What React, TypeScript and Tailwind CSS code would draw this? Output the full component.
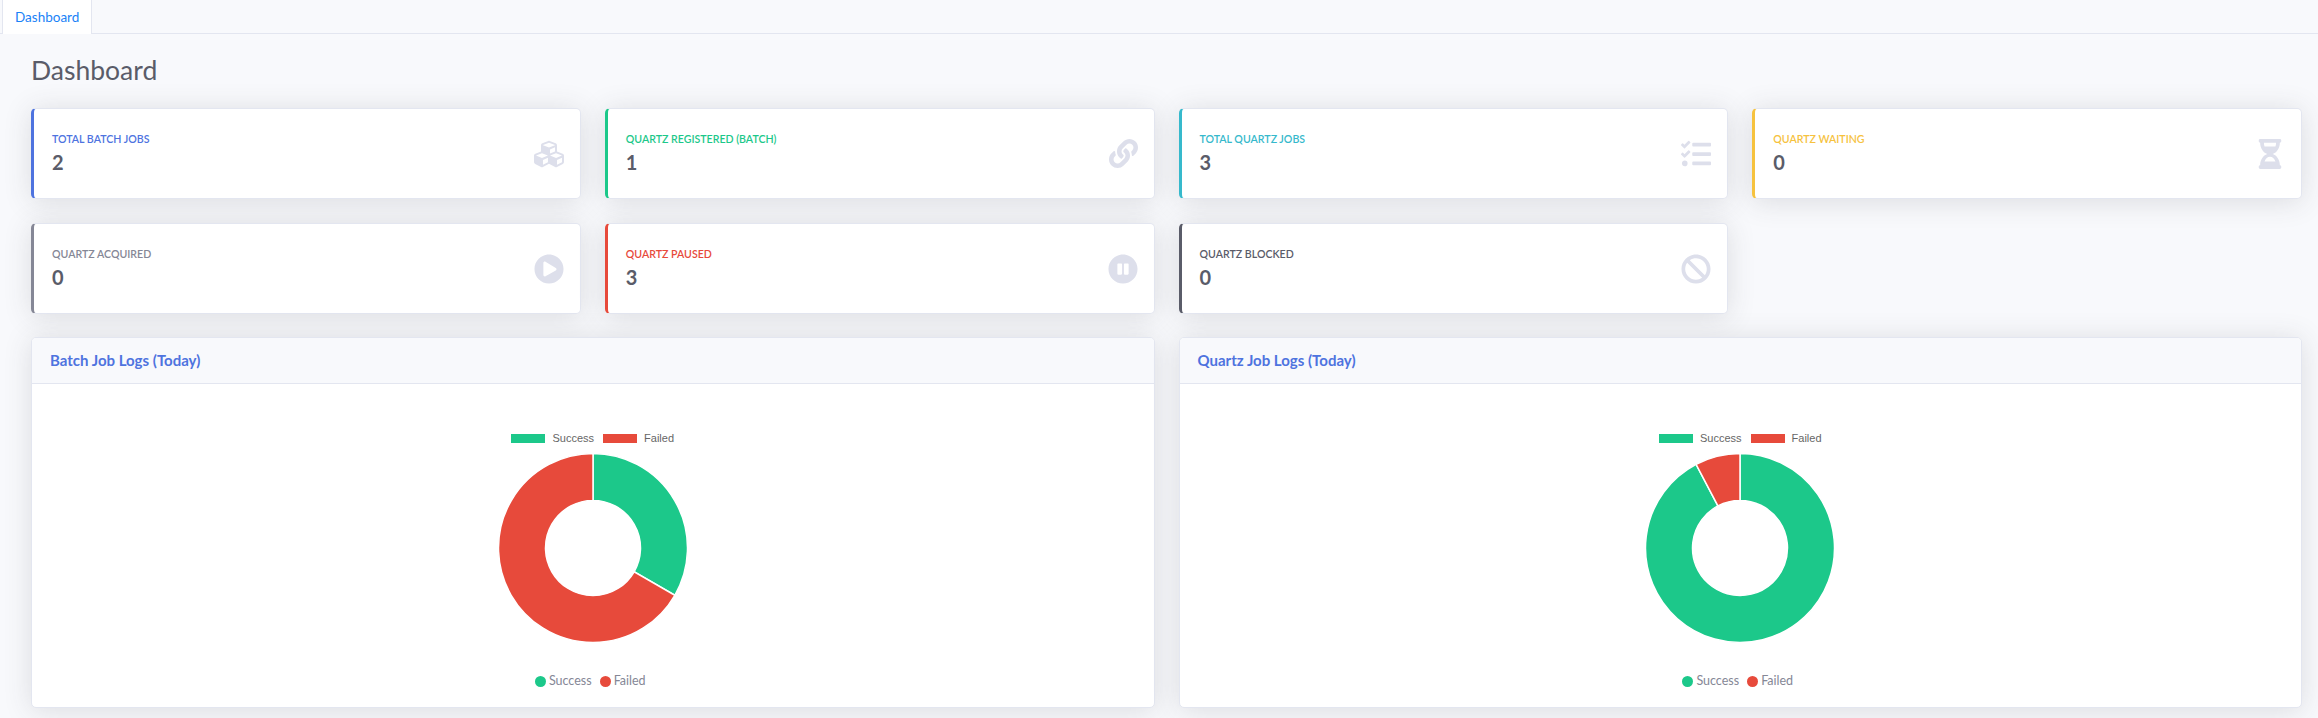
import { FaBan, FaCubes, FaHourglassHalf, FaLink, FaPauseCircle, FaPlayCircle, FaTasks } from "react-icons/fa"

const stats = [
  { title: "Total Batch Jobs", value: 2, border: "border-l-[#4e73df]", text: "text-[#4e73df]", icon: <FaCubes size={30} /> },
  { title: "Quartz Registered (Batch)", value: 1, border: "border-l-[#1cc88a]", text: "text-[#1cc88a]", icon: <FaLink size={29} /> },
  { title: "Total Quartz Jobs", value: 3, border: "border-l-[#36b9cc]", text: "text-[#36b9cc]", icon: <FaTasks size={30} /> },
  { title: "Quartz Waiting", value: 0, border: "border-l-[#f6c23e]", text: "text-[#f6c23e]", icon: <FaHourglassHalf size={30} /> },
  { title: "Quartz Acquired", value: 0, border: "border-l-[#858796]", text: "text-[#858796]", icon: <FaPlayCircle size={30} /> },
  { title: "Quartz Paused", value: 3, border: "border-l-[#e74a3b]", text: "text-[#e74a3b]", icon: <FaPauseCircle size={30} /> },
  { title: "Quartz Blocked", value: 0, border: "border-l-[#5a5c69]", text: "text-[#5a5c69]", icon: <FaBan size={30} /> },
]

const polar = (r: number, turn: number) => {
  const a = turn * 2 * Math.PI
  return `${96 + r * Math.sin(a)} ${96 - r * Math.cos(a)}`
}

function arc(from: number, to: number) {
  const large = to - from > 0.5 ? 1 : 0
  return `M${polar(94.5, from)} A94.5 94.5 0 ${large} 1 ${polar(94.5, to)} L${polar(47.5, to)} A47.5 47.5 0 ${large} 0 ${polar(47.5, from)} Z`
}

function Donut({ share }: { share: number }) {
  return (
    <svg width="192" height="192" viewBox="0 0 192 192" className="w-[192px] h-[192px]">
      <path d={arc(0, share)} fill="#1cc88a" stroke="#fff" strokeWidth="1.5" />
      <path d={arc(share, 1)} fill="#e74a3b" stroke="#fff" strokeWidth="1.5" />
    </svg>
  )
}

function StatCard({ title, value, border, text, icon }: (typeof stats)[0]) {
  return (
    <div className={`h-[91px] bg-white rounded-[5px] border border-[#e3e6f0] border-l-[3px] ${border} shadow-[0_2.4px_28px_0_rgba(58,59,69,0.15)] flex items-center justify-between pl-[18px] pr-[16px]`}>
      <div className="mt-[1px]">
        <div className={`text-[10.6px] leading-[14px] font-semibold uppercase ${text}`}>{title}</div>
        <div className="text-[20px] leading-[28px] mt-[2px] font-bold text-[#5a5c69]">{value}</div>
      </div>
      <div className="text-[#dddfeb]">{icon}</div>
    </div>
  )
}

function LegendTop() {
  return (
    <div className="flex items-center justify-center gap-[9px] h-[14px] text-[11px] text-[#666] font-['Liberation_Sans',sans-serif]">
      <span className="flex items-center gap-[7px]">
        <i className="block w-[34px] h-[9px] bg-[#1cc88a]" />
        Success
      </span>
      <span className="flex items-center gap-[7px]">
        <i className="block w-[34px] h-[9px] bg-[#e74a3b]" />
        Failed
      </span>
    </div>
  )
}

function LegendBottom() {
  return (
    <div className="-ml-[5px] flex items-center justify-center gap-[8px] text-[12.5px] leading-[16px] text-[#858796]">
      <span className="flex items-center gap-[3px]">
        <i className="block w-[11px] h-[11px] rounded-full bg-[#1cc88a]" />
        Success
      </span>
      <span className="flex items-center gap-[3px]">
        <i className="block w-[11px] h-[11px] rounded-full bg-[#e74a3b]" />
        Failed
      </span>
    </div>
  )
}

function ChartCard({ title, share }: { title: string; share: number }) {
  return (
    <div className="h-[371px] bg-white rounded-[5px] border border-[#e3e6f0] shadow-[0_2.4px_28px_0_rgba(58,59,69,0.15)] overflow-hidden">
      <div className="h-[46px] bg-[#f8f9fc] border-b border-[#e3e6f0] flex items-center px-[18px] text-[15px] font-bold text-[#4e73df]">{title}</div>
      <div className="flex flex-col items-center pt-[47px]">
        <LegendTop />
        <div className="mt-[7px]">
          <Donut share={share} />
        </div>
        <div className="mt-[29px]">
          <LegendBottom />
        </div>
      </div>
    </div>
  )
}

export default function App() {
  return (
    <div className="min-h-[718px] bg-[#f8f9fc] font-['Lato',sans-serif] overflow-hidden">
      <div className="h-[34px] border-b border-[#e3e6f0] flex pl-[2px]">
        <div className="h-[34px] bg-white border-x border-[#e3e6f0] px-[12px] flex items-center text-[13.5px] text-[#1a82f7]">Dashboard</div>
      </div>
      <div className="pl-[31px] pr-[16px]">
        <h1 className="text-[26.5px] leading-[34px] font-normal text-[#5a5c69] mt-[19px] mb-[21px]">Dashboard</h1>
        <div className="grid grid-cols-4 gap-x-[24px] gap-y-[24px]">
          {stats.map((s) => (
            <StatCard key={s.title} {...s} />
          ))}
        </div>
        <div className="grid grid-cols-2 gap-x-[24px] mt-[23px]">
          <ChartCard title="Batch Job Logs (Today)" share={1 / 3} />
          <ChartCard title="Quartz Job Logs (Today)" share={12 / 13} />
        </div>
      </div>
    </div>
  )
}
